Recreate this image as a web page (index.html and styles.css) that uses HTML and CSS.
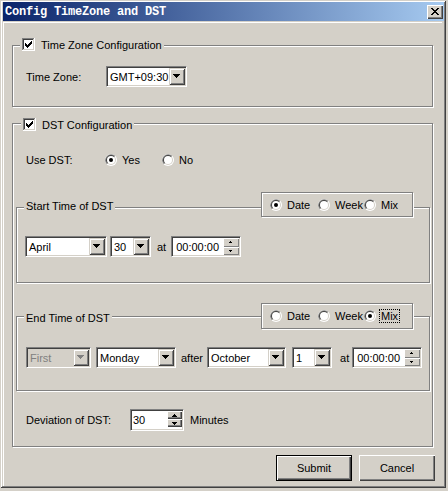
FILE: index.html
```html
<!DOCTYPE html>
<html>
<head>
<meta charset="utf-8">
<title>Config TimeZone and DST</title>
<link rel="stylesheet" href="styles.css">
</head>
<body>
<div class="window">
  <div class="titlebar">
    <span class="title">Config TimeZone and DST</span>
    <span class="close"><svg width="16" height="14" viewBox="0 0 16 14" shape-rendering="crispEdges"><path transform="translate(4 3)" fill="#000" d="M0 0h2v1h-2z M6 0h2v1h-2z M1 1h2v1h-2z M5 1h2v1h-2z M2 2h4v1h-4z M3 3h2v1h-2z M2 4h4v1h-4z M1 5h2v1h-2z M5 5h2v1h-2z M0 6h2v1h-2z M6 6h2v1h-2z"/></svg></span>
  </div>
  <div class="client">
    <div class="group g-tz">
      <div class="legend lg-tz">
        <svg class="cb" width="13" height="13" viewBox="0 0 13 13" shape-rendering="crispEdges"><rect width="13" height="13" fill="#fff"/><rect width="12" height="12" fill="#808080"/><rect x="1" y="1" width="11" height="11" fill="#D4D0C8"/><rect x="1" y="1" width="10" height="10" fill="#404040"/><rect x="2" y="2" width="9" height="9" fill="#fff"/><path transform="translate(3 3)" fill="#000" d="M6 0h1v1h-1z M5 1h2v1h-2z M0 2h1v1h-1z M4 2h3v1h-3z M0 3h2v1h-2z M3 3h3v1h-3z M0 4h5v1h-5z M1 5h3v1h-3z M2 6h1v1h-1z"/></svg>
        <span class="ltext">Time Zone Configuration</span>
      </div>
      <div class="row tz-row">
        <span class="lbl lbl-tz">Time Zone:</span>
        <div class="combo c-tz"><span class="val">GMT+09:30</span><span class="drop"><svg width="8" height="5" viewBox="0 0 8 5" shape-rendering="crispEdges"><path fill="#000" d="M0 0h7v1h-1v1h-1v1h-1v1h-1v-1h-1v-1h-1v-1h-1z"/></svg></span></div>
      </div>
    </div>

    <div class="group g-dst">
      <div class="legend lg-dst">
        <svg class="cb" width="13" height="13" viewBox="0 0 13 13" shape-rendering="crispEdges"><rect width="13" height="13" fill="#fff"/><rect width="12" height="12" fill="#808080"/><rect x="1" y="1" width="11" height="11" fill="#D4D0C8"/><rect x="1" y="1" width="10" height="10" fill="#404040"/><rect x="2" y="2" width="9" height="9" fill="#fff"/><path transform="translate(3 3)" fill="#000" d="M6 0h1v1h-1z M5 1h2v1h-2z M0 2h1v1h-1z M4 2h3v1h-3z M0 3h2v1h-2z M3 3h3v1h-3z M0 4h5v1h-5z M1 5h3v1h-3z M2 6h1v1h-1z"/></svg>
        <span class="ltext">DST Configuration</span>
      </div>

      <div class="row use-row">
        <span class="lbl lbl-use">Use DST:</span>
        <span class="radio-item ri-yes"><svg class="rd" width="12" height="12" viewBox="0 0 12 12"><circle cx="6" cy="6" r="6" fill="#fff"/><path d="M1.76 10.24A6 6 0 0 1 10.24 1.76Z" fill="#808080"/><circle cx="6" cy="6" r="5" fill="#D4D0C8"/><path d="M2.46 9.54A5 5 0 0 1 9.54 2.46Z" fill="#404040"/><circle cx="6" cy="6" r="4" fill="#fff"/><circle cx="6" cy="6" r="2" fill="#000"/></svg><span>Yes</span></span>
        <span class="radio-item"><svg class="rd" width="12" height="12" viewBox="0 0 12 12"><circle cx="6" cy="6" r="6" fill="#fff"/><path d="M1.76 10.24A6 6 0 0 1 10.24 1.76Z" fill="#808080"/><circle cx="6" cy="6" r="5" fill="#D4D0C8"/><path d="M2.46 9.54A5 5 0 0 1 9.54 2.46Z" fill="#404040"/><circle cx="6" cy="6" r="4" fill="#fff"/></svg><span>No</span></span>
      </div>

      <div class="group g-start">
        <div class="legend lg-start">Start Time of DST</div>
        <div class="radiobox rb-start">
          <span class="radio-item ri-date"><svg class="rd" width="12" height="12" viewBox="0 0 12 12"><circle cx="6" cy="6" r="6" fill="#fff"/><path d="M1.76 10.24A6 6 0 0 1 10.24 1.76Z" fill="#808080"/><circle cx="6" cy="6" r="5" fill="#D4D0C8"/><path d="M2.46 9.54A5 5 0 0 1 9.54 2.46Z" fill="#404040"/><circle cx="6" cy="6" r="4" fill="#fff"/><circle cx="6" cy="6" r="2" fill="#000"/></svg><span>Date</span></span>
          <span class="radio-item ri-week"><svg class="rd" width="12" height="12" viewBox="0 0 12 12"><circle cx="6" cy="6" r="6" fill="#fff"/><path d="M1.76 10.24A6 6 0 0 1 10.24 1.76Z" fill="#808080"/><circle cx="6" cy="6" r="5" fill="#D4D0C8"/><path d="M2.46 9.54A5 5 0 0 1 9.54 2.46Z" fill="#404040"/><circle cx="6" cy="6" r="4" fill="#fff"/></svg><span>Week</span></span>
          <span class="radio-item"><svg class="rd" width="12" height="12" viewBox="0 0 12 12"><circle cx="6" cy="6" r="6" fill="#fff"/><path d="M1.76 10.24A6 6 0 0 1 10.24 1.76Z" fill="#808080"/><circle cx="6" cy="6" r="5" fill="#D4D0C8"/><path d="M2.46 9.54A5 5 0 0 1 9.54 2.46Z" fill="#404040"/><circle cx="6" cy="6" r="4" fill="#fff"/></svg><span>Mix</span></span>
        </div>
        <div class="row start-row">
          <div class="combo c-month"><span class="val">April</span><span class="drop"><svg width="8" height="5" viewBox="0 0 8 5" shape-rendering="crispEdges"><path fill="#000" d="M0 0h7v1h-1v1h-1v1h-1v1h-1v-1h-1v-1h-1v-1h-1z"/></svg></span></div>
          <div class="combo c-day"><span class="val">30</span><span class="drop"><svg width="8" height="5" viewBox="0 0 8 5" shape-rendering="crispEdges"><path fill="#000" d="M0 0h7v1h-1v1h-1v1h-1v1h-1v-1h-1v-1h-1v-1h-1z"/></svg></span></div>
          <span class="txt at1">at</span>
          <div class="spin spin-time"><span class="val">00:00:00</span><span class="spinbtns"><span class="sb"><svg width="4" height="2" viewBox="0 0 4 2" shape-rendering="crispEdges"><path fill="#000" d="M1 0h1v1h1v1h-3v-1h1z"/></svg></span><span class="sb"><svg width="4" height="2" viewBox="0 0 4 2" shape-rendering="crispEdges"><path fill="#000" d="M0 0h3v1h-1v1h-1v-1h-1z"/></svg></span></span></div>
        </div>
      </div>

      <div class="group g-end">
        <div class="legend lg-end">End Time of DST</div>
        <div class="radiobox rb-end">
          <span class="radio-item ri-date"><svg class="rd" width="12" height="12" viewBox="0 0 12 12"><circle cx="6" cy="6" r="6" fill="#fff"/><path d="M1.76 10.24A6 6 0 0 1 10.24 1.76Z" fill="#808080"/><circle cx="6" cy="6" r="5" fill="#D4D0C8"/><path d="M2.46 9.54A5 5 0 0 1 9.54 2.46Z" fill="#404040"/><circle cx="6" cy="6" r="4" fill="#fff"/></svg><span>Date</span></span>
          <span class="radio-item ri-week"><svg class="rd" width="12" height="12" viewBox="0 0 12 12"><circle cx="6" cy="6" r="6" fill="#fff"/><path d="M1.76 10.24A6 6 0 0 1 10.24 1.76Z" fill="#808080"/><circle cx="6" cy="6" r="5" fill="#D4D0C8"/><path d="M2.46 9.54A5 5 0 0 1 9.54 2.46Z" fill="#404040"/><circle cx="6" cy="6" r="4" fill="#fff"/></svg><span>Week</span></span>
          <span class="radio-item"><svg class="rd" width="12" height="12" viewBox="0 0 12 12"><circle cx="6" cy="6" r="6" fill="#fff"/><path d="M1.76 10.24A6 6 0 0 1 10.24 1.76Z" fill="#808080"/><circle cx="6" cy="6" r="5" fill="#D4D0C8"/><path d="M2.46 9.54A5 5 0 0 1 9.54 2.46Z" fill="#404040"/><circle cx="6" cy="6" r="4" fill="#fff"/><circle cx="6" cy="6" r="2" fill="#000"/></svg><span class="focus">Mix</span></span>
        </div>
        <div class="row end-row">
          <div class="combo c-first disabled"><span class="val">First</span><span class="drop"><svg width="8" height="5" viewBox="0 0 8 5" shape-rendering="crispEdges"><path fill="#808080" d="M0 0h7v1h-1v1h-1v1h-1v1h-1v-1h-1v-1h-1v-1h-1z"/></svg></span></div>
          <div class="combo c-wday"><span class="val">Monday</span><span class="drop"><svg width="8" height="5" viewBox="0 0 8 5" shape-rendering="crispEdges"><path fill="#000" d="M0 0h7v1h-1v1h-1v1h-1v1h-1v-1h-1v-1h-1v-1h-1z"/></svg></span></div>
          <span class="txt after">after</span>
          <div class="combo c-oct"><span class="val">October</span><span class="drop"><svg width="8" height="5" viewBox="0 0 8 5" shape-rendering="crispEdges"><path fill="#000" d="M0 0h7v1h-1v1h-1v1h-1v1h-1v-1h-1v-1h-1v-1h-1z"/></svg></span></div>
          <div class="combo c-one"><span class="val">1</span><span class="drop"><svg width="8" height="5" viewBox="0 0 8 5" shape-rendering="crispEdges"><path fill="#000" d="M0 0h7v1h-1v1h-1v1h-1v1h-1v-1h-1v-1h-1v-1h-1z"/></svg></span></div>
          <span class="txt at2">at</span>
          <div class="spin spin-time"><span class="val">00:00:00</span><span class="spinbtns"><span class="sb"><svg width="4" height="2" viewBox="0 0 4 2" shape-rendering="crispEdges"><path fill="#000" d="M1 0h1v1h1v1h-3v-1h1z"/></svg></span><span class="sb"><svg width="4" height="2" viewBox="0 0 4 2" shape-rendering="crispEdges"><path fill="#000" d="M0 0h3v1h-1v1h-1v-1h-1z"/></svg></span></span></div>
        </div>
      </div>

      <div class="row dev-row">
        <span class="lbl lbl-dev">Deviation of DST:</span>
        <div class="spin spin-dev"><span class="val">30</span><span class="spinbtns"><span class="sb"><svg width="6" height="3" viewBox="0 0 6 3" shape-rendering="crispEdges"><path fill="#000" d="M2 0h1v1h1v1h1v1h-5v-1h1v-1h1z"/></svg></span><span class="sb"><svg width="6" height="3" viewBox="0 0 6 3" shape-rendering="crispEdges"><path fill="#000" d="M0 0h5v1h-1v1h-1v1h-1v-1h-1v-1h-1z"/></svg></span></span></div>
        <span class="txt minutes">Minutes</span>
      </div>
    </div>

    <div class="buttons">
      <div class="btn default">Submit</div>
      <div class="btn">Cancel</div>
    </div>
  </div>
</div>
</body>
</html>
```

FILE: styles.css
```css
* { box-sizing: border-box; }
html, body { margin: 0; padding: 0; }
body {
  width: 448px;
  height: 491px;
  overflow: hidden;
  background: #D4D0C8;
  font-family: "Liberation Sans", Arial, sans-serif;
  font-size: 11px;
  color: #000;
}
svg { display: block; flex: none; }

.window {
  width: 446px;
  height: 488px;
  background: #D4D0C8;
  padding: 2px 4px 2px 3px;
  display: flex;
  flex-direction: column;
  box-shadow: inset 1px 1px 0 #D4D0C8, inset -1px -1px 0 #404040,
              inset 2px 2px 0 #fff, inset -2px -2px 0 #808080;
}

.titlebar {
  height: 19px;
  margin-right: -2px;
  margin-bottom: 1px;
  background: linear-gradient(to right, #0A246A, #A6CAF0);
  display: flex;
  align-items: center;
  padding-left: 2px;
}
.title {
  font-family: "Liberation Mono", "Courier New", monospace;
  font-weight: bold;
  font-size: 12px;
  letter-spacing: -0.2px;
  color: #fff;
}
.close {
  margin-left: auto;
  margin-right: 1px;
  width: 16px;
  height: 14px;
  background: #D4D0C8;
  box-shadow: inset 1px 1px 0 #fff, inset -1px -1px 0 #404040, inset -2px -2px 0 #808080;
}

.client {
  flex: 1;
  border-top: 1px solid #fff;
  border-left: 1px solid #fff;
  display: flex;
  flex-direction: column;
  align-items: flex-start;
}

.group {
  position: relative;
  border: 1px solid #808080;
  box-shadow: inset 1px 1px 0 #fff, 1px 1px 0 #fff;
  display: flex;
  flex-direction: column;
  align-items: flex-start;
  flex: none;
}
.g-tz {
  margin: 22px 0 0 8px;
  width: 421px;
  height: 62px;
  padding: 20px 0 0 13px;
}
.g-dst {
  margin: 16px 0 0 8px;
  width: 421px;
  height: 324px;
  padding: 29px 0 0 3px;
}
.g-start {
  margin-top: 41px;
  width: 414px;
  height: 76px;
  padding: 28px 0 0 8px;
}
.g-end {
  margin-top: 33px;
  width: 414px;
  height: 75px;
  padding: 30px 0 0 9px;
}

.legend {
  position: absolute;
  display: flex;
  align-items: center;
  background: #D4D0C8;
  padding: 0 2px;
  white-space: nowrap;
}
.lg-tz { top: -9px; left: 7px; height: 15px; }
.lg-dst { top: -7px; left: 8px; height: 15px; }
.lg-start { top: -9px; left: 7px; height: 13px; }
.lg-end { top: -6px; left: 7px; height: 13px; }
.ltext { margin-left: 6px; }

.radiobox {
  position: absolute;
  left: 244px;
  width: 152px;
  border: 1px solid #808080;
  box-shadow: inset 1px 1px 0 #fff, 1px 1px 0 #fff;
  background: #D4D0C8;
  display: flex;
  align-items: center;
  padding-left: 8px;
}
.rb-start { top: -16px; height: 25px; }
.rb-end { top: -14px; height: 26px; }

.radio-item {
  display: flex;
  align-items: center;
  flex: none;
  white-space: nowrap;
}
.radio-item .rd { margin-right: 5px; }
.ri-yes { width: 57px; }
.ri-date { width: 48px; }
.ri-week { width: 46px; }
.focus { outline: 1px dotted #000; outline-offset: 0; padding: 0 1px; margin-left: -1px; }

.row {
  display: flex;
  align-items: center;
  flex: none;
}
.tz-row { height: 21px; }
.lbl { flex: none; white-space: nowrap; }
.lbl-tz { width: 80px; }
.use-row { height: 13px; padding-left: 10px; }
.lbl-use { width: 79px; }
.start-row, .end-row { height: 21px; }
.dev-row { margin-top: 18px; height: 22px; padding-left: 10px; }
.lbl-dev { width: 104px; }
.txt { flex: none; white-space: nowrap; }
.at1 { margin: 0 5px 0 6px; }
.after { margin: 0 4px 0 5px; }
.at2 { margin: 0 3px 0 8px; }
.minutes { margin-left: 6px; }

.combo, .spin {
  height: 21px;
  display: flex;
  align-items: stretch;
  background: #fff;
  border: 1px solid;
  border-color: #808080 #fff #fff #808080;
  box-shadow: inset 1px 1px 0 #404040, inset -1px -1px 0 #D4D0C8;
  padding: 1px;
  flex: none;
}
.combo .val, .spin .val {
  flex: 1;
  display: flex;
  align-items: center;
  padding-left: 2px;
  white-space: nowrap;
  overflow: hidden;
}
.combo .drop {
  width: 16px;
  flex: none;
  background: #D4D0C8;
  display: flex;
  align-items: center;
  justify-content: center;
  box-shadow: inset 1px 1px 0 #D4D0C8, inset -1px -1px 0 #404040,
              inset 2px 2px 0 #fff, inset -2px -2px 0 #808080;
}
.combo.disabled { background: #D4D0C8; }
.combo.disabled .val { color: #808080; }

.c-tz { width: 81px; }
.c-month { width: 82px; margin-right: 3px; }
.c-day { width: 41px; }
.c-first { width: 65px; margin-right: 5px; }
.c-wday { width: 80px; }
.c-oct { width: 79px; margin-right: 6px; }
.c-one { width: 40px; }

.spin-time { width: 70px; }
.spin-time .val { padding-left: 3px; }
.spinbtns {
  width: 16px;
  flex: none;
  display: flex;
  flex-direction: column;
}
.sb {
  flex: 1;
  display: flex;
  align-items: center;
  justify-content: center;
  background: #D4D0C8;
  box-shadow: inset 1px 1px 0 #fff, inset -1px -1px 0 #808080;
}

.spin-dev { width: 54px; height: 22px; }
.spin-dev .val { padding-left: 1px; }
.spin-dev .spinbtns { width: 15px; height: 16px; align-self: flex-start; }
.spin-dev .sb {
  box-shadow: inset 1px 1px 0 #fff, inset -1px -1px 0 #404040, inset -2px -2px 0 #808080;
}

.buttons {
  margin-top: 8px;
  align-self: stretch;
  display: flex;
  justify-content: flex-end;
  gap: 7px;
  padding-right: 7px;
}
.btn {
  width: 76px;
  height: 26px;
  display: flex;
  align-items: center;
  justify-content: center;
  background: #D4D0C8;
  box-shadow: inset 1px 1px 0 #fff, inset -1px -1px 0 #404040, inset -2px -2px 0 #808080;
}
.btn.default { border: 1px solid #000; }
```
